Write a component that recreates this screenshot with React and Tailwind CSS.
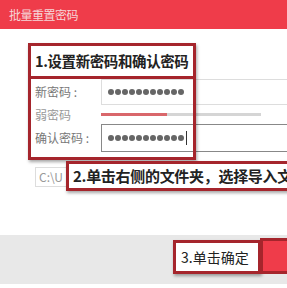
import React from "react";

const font = { fontFamily: '"Noto Sans CJK SC", "Liberation Sans", sans-serif' };

function Dots({ n = 11, cursor = false }) {
  return (
    <div className="flex items-center gap-[1px] pl-[6px]">
      {Array.from({ length: n }).map((_, i) => (
        <span key={i} className="w-[6px] h-[6px] rounded-full bg-[#666]" />
      ))}
      {cursor && <span className="ml-[1px] w-[1px] h-[14px] bg-[#333]" />}
    </div>
  );
}

export default function App() {
  return (
    <div className="relative w-[287px] h-[288px] overflow-hidden bg-white" style={font}>
      {/* header */}
      <div className="h-[29px] bg-[#ef3c4a] flex items-center pl-[9px]">
        <span className="text-[12px] text-[#f6d6d8] tracking-[-0.5px]">批量重置密码</span>
      </div>

      {/* body */}
      <div className="h-[206px] relative">
        <div className="absolute left-[35px] top-[50px] right-[-40px] flex flex-col">
          <div className="flex items-center h-[26px]">
            <span className="w-[66px] text-[12px] text-[#777]">新密码 :</span>
            <div className="flex-1 h-[26px] border border-[#ddd] bg-white flex items-center">
              <Dots />
            </div>
          </div>
          <div className="flex items-center h-[19px]">
            <span className="w-[66px] text-[12px] text-[#999]">弱密码</span>
            <div className="flex h-[3px] w-[160px]">
              <div className="w-[66px] bg-[#d9676b]" />
              <div className="flex-1 bg-[#d5d5d5]" />
            </div>
          </div>
          <div className="flex items-center h-[28px]">
            <span className="w-[66px] text-[12px] text-[#777]">确认密码 :</span>
            <div className="flex-1 h-[28px] border border-[#888] bg-white flex items-center">
              <Dots cursor />
            </div>
          </div>
          <div className="mt-[15px] h-[20px] w-[31px] border border-r-0 border-[#ddd] flex items-center pl-[3px] overflow-hidden">
            <span className="text-[12px] text-[#999] whitespace-nowrap">C:\U</span>
          </div>
        </div>

        {/* callout 1 */}
        <div className="absolute left-[28px] top-[14px] w-[168px] h-[117px] border-[3px] border-[#a5252c] shadow-[1px_2px_3px_rgba(0,0,0,0.35)]">
          <div className="h-[33px] bg-white border-b-[3px] border-[#a5252c] flex items-center pl-[4px]">
            <span className="text-[14.5px] font-bold text-[#222] whitespace-nowrap tracking-[-0.4px]">1.设置新密码和确认密码</span>
          </div>
        </div>

        {/* callout 2 */}
        <div className="absolute left-[66px] top-[132px] w-[240px] h-[30px] bg-white border-[3px] border-[#a5252c] shadow-[1px_2px_3px_rgba(0,0,0,0.35)] flex items-center pl-[4px] overflow-hidden">
          <span className="text-[15px] font-bold text-[#222] whitespace-nowrap tracking-[-0.3px]">2.单击右侧的文件夹，选择导入文件</span>
        </div>
      </div>

      {/* footer */}
      <div className="h-[49px] bg-[#e8e8e8] relative">
        <div className="absolute left-[173px] top-[5px] w-[88px] h-[34px] bg-white border-[3px] border-[#a5252c] shadow-[1px_2px_3px_rgba(0,0,0,0.35)] flex items-center pl-[5px]">
          <span className="text-[14px] text-[#222] whitespace-nowrap">3.单击确定</span>
        </div>
        <div className="absolute left-[260px] top-[3px] w-[40px] h-[36px] bg-[#ef3c4a] border-[3px] border-[#a5252c]" />
      </div>
    </div>
  );
}
